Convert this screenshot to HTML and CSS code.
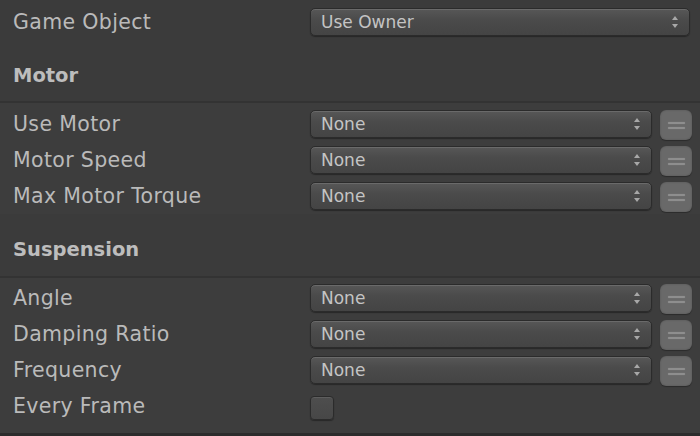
FILE: index.html
```html
<!DOCTYPE html>
<html>
<head>
<meta charset="utf-8">
<link rel="stylesheet" href="styles.css">
</head>
<body>
<div class="panel">
  <div class="row first">
    <div class="label">Game Object</div>
    <div class="dropdown wide"><span>Use Owner</span><span class="arrows"></span></div>
  </div>
  <div class="header motor">Motor</div>
  <div class="section">
    <div class="row">
      <div class="label">Use Motor</div>
      <div class="dropdown"><span>None</span><span class="arrows"></span></div>
      <div class="eqbtn"><i></i><i></i></div>
    </div>
    <div class="row">
      <div class="label">Motor Speed</div>
      <div class="dropdown"><span>None</span><span class="arrows"></span></div>
      <div class="eqbtn"><i></i><i></i></div>
    </div>
    <div class="row">
      <div class="label">Max Motor Torque</div>
      <div class="dropdown"><span>None</span><span class="arrows"></span></div>
      <div class="eqbtn"><i></i><i></i></div>
    </div>
  </div>
  <div class="header susp">Suspension</div>
  <div class="section last">
    <div class="row">
      <div class="label">Angle</div>
      <div class="dropdown"><span>None</span><span class="arrows"></span></div>
      <div class="eqbtn"><i></i><i></i></div>
    </div>
    <div class="row">
      <div class="label">Damping Ratio</div>
      <div class="dropdown"><span>None</span><span class="arrows"></span></div>
      <div class="eqbtn"><i></i><i></i></div>
    </div>
    <div class="row">
      <div class="label">Frequency</div>
      <div class="dropdown"><span>None</span><span class="arrows"></span></div>
      <div class="eqbtn"><i></i><i></i></div>
    </div>
    <div class="row check">
      <div class="label">Every Frame</div>
      <div class="checkbox"></div>
    </div>
  </div>
</div>
</body>
</html>
```

FILE: styles.css
```css
html, body {
  margin: 0;
  padding: 0;
  background: #3b3b3b;
}
body {
  width: 700px;
  height: 436px;
  overflow: hidden;
  font-family: "DejaVu Sans", "Lucida Grande", sans-serif;
  color: #bababa;
}
.panel {
  height: 433px;
  border-bottom: 3px solid #2c2c2c;
  display: flex;
  flex-direction: column;
}
.row {
  height: 36px;
  display: flex;
  align-items: center;
  padding-left: 13px;
}
.row.first {
  height: 28px;
  padding-top: 8px;
  padding-bottom: 5px;
}
.label {
  width: 297px;
  font-size: 20.5px;
  line-height: 24px;
  letter-spacing: 0.35px;
  white-space: nowrap;
}
.header {
  box-sizing: border-box;
  display: flex;
  align-items: center;
  padding-left: 13px;
  padding-top: 8px;
  font-size: 19.5px;
  font-weight: bold;
  color: #bdbdbd;
  border-bottom: 2px solid #333333;
}
.header.motor {
  height: 62px;
}
.header.susp {
  height: 64px;
}
.section {
  background: #3d3d3d;
  padding-top: 3px;
}
.section.last {
  padding-top: 2px;
  flex: 1;
}
.dropdown {
  box-sizing: border-box;
  width: 342px;
  height: 28px;
  border-radius: 5px;
  background: linear-gradient(#575757, #4b4b4b 40%, #444444);
  border: 1px solid #2b2b2b;
  box-shadow: inset 0 1px 0 #6a6a6a, 0 1px 1px rgba(0,0,0,0.35);
  display: flex;
  align-items: center;
  justify-content: space-between;
  padding: 0 10px 0 10px;
  font-size: 17px;
  color: #c4c4c4;
}
.dropdown.wide {
  width: 380px;
}
.arrows {
  width: 7px;
  height: 12px;
  position: relative;
}
.arrows::before, .arrows::after {
  content: "";
  position: absolute;
  left: 0;
  border-left: 3.5px solid transparent;
  border-right: 3.5px solid transparent;
}
.arrows::before {
  top: 0;
  border-bottom: 4px solid #a8a8a8;
}
.arrows::after {
  bottom: 0;
  border-top: 4px solid #a8a8a8;
}
.eqbtn {
  box-sizing: border-box;
  margin-left: 8px;
  width: 32px;
  height: 30px;
  margin-top: 2px;
  border-radius: 6px;
  background: #696969;
  box-shadow: inset 0 0 2px rgba(0,0,0,0.25), 0 1px 1px rgba(0,0,0,0.3);
  display: flex;
  flex-direction: column;
  align-items: center;
  justify-content: center;
  gap: 3px;
}
.eqbtn i {
  display: block;
  width: 17px;
  height: 2px;
  border-radius: 1px;
  background: #8e8e8e;
  box-shadow: 0 0 1px #8e8e8e;
}
.row.check {
  align-items: flex-start;
  padding-top: 8px;
}
.row.check .label {
  margin-top: -2px;
}
.checkbox {
  box-sizing: border-box;
  width: 24px;
  height: 24px;
  border-radius: 4px;
  background: linear-gradient(#4e4e4e, #474747);
  border: 1px solid #2b2b2b;
  box-shadow: inset 0 1px 0 #5e5e5e, 0 1px 1px rgba(0,0,0,0.35);
}
```
